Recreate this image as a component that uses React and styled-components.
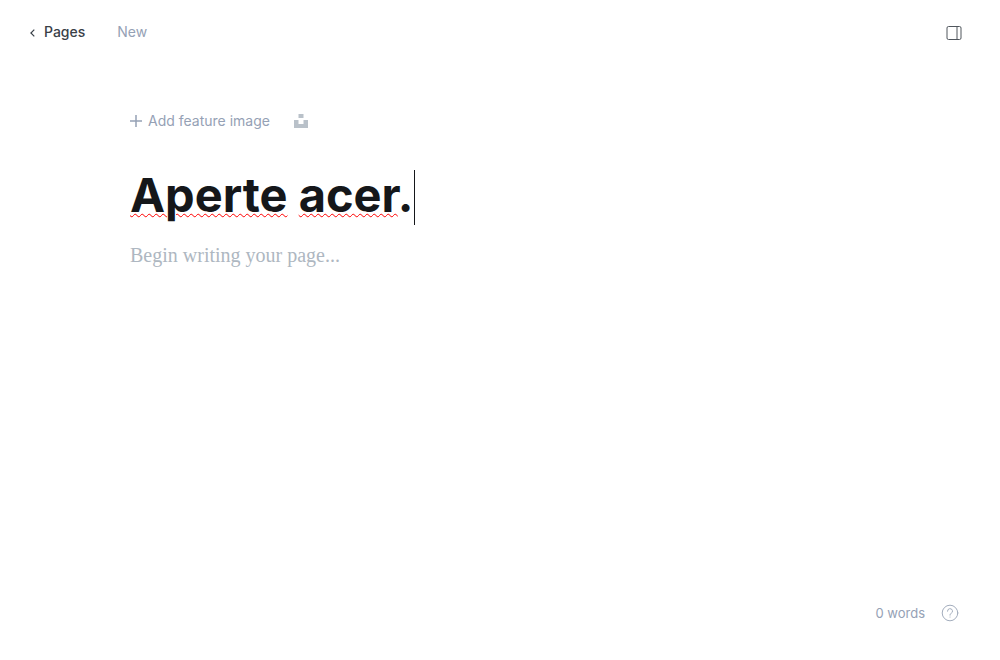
import React from "react";
import styled, { createGlobalStyle } from "styled-components";

const Global = createGlobalStyle`
  *, *::before, *::after { box-sizing: border-box; }
  body { margin: 0; background: #fff; color: #15171a; font-family: Inter, "Liberation Sans", sans-serif; }
  button, input, textarea { font: inherit; border: 0; padding: 0; margin: 0; background: none; outline: 0; }
  button { cursor: pointer; }
  svg { display: block; flex: none; }
`;
const Screen = styled.div`
  min-height: 100vh;
  display: flex;
  flex-direction: column;
`;
const Header = styled.header`
  display: flex;
  align-items: center;
  justify-content: space-between;
  padding: 16px 30px 16px 28px;
`;
const Crumbs = styled.nav`
  display: flex;
  align-items: center;
  gap: 32px;
  font-size: 14px;
  line-height: 32px;
`;
const BackLink = styled.a`
  display: flex;
  align-items: center;
  gap: 8px;
  color: #394047;
  font-weight: 500;
  text-decoration: none;
`;
const Status = styled.span`
  color: #95a1b5;
`;
const IconButton = styled.button`
  display: flex;
  align-items: center;
  justify-content: center;
  width: ${(p) => p.$size}px;
  height: ${(p) => p.$size}px;
  color: ${(p) => p.$color};
`;
const Editor = styled.main`
  flex: 1;
  width: 100%;
  max-width: 740px;
  margin: 0 auto;
  padding-top: 41px;
`;
const Tools = styled.div`
  display: flex;
  align-items: center;
  gap: 24px;
  height: 32px;
`;
const AddImage = styled.button`
  display: flex;
  align-items: center;
  gap: 6px;
  color: #95a1b5;
  font-size: 14px;
  line-height: 16px;
`;
const TitleField = styled.div`
  display: flex;
  align-items: flex-start;
  margin-top: 33px;
`;
const TitleText = styled.h1`
  margin: 0;
  font-size: 47px;
  line-height: 50px;
  font-weight: 700;
  outline: 0;
  caret-color: transparent;
`;
const Typo = styled.span`
  text-decoration: underline wavy #f00 1px;
`;
const Caret = styled.span`
  width: 1px;
  height: 55px;
  background: #15171a;
`;
const Body = styled.textarea`
  display: block;
  width: 100%;
  height: 32px;
  margin-top: 14px;
  resize: none;
  font-family: "Liberation Serif", serif;
  font-size: 20px;
  line-height: 32px;
  &::placeholder { color: #aeb7c1; opacity: 1; }
`;
const Footer = styled.footer`
  display: flex;
  justify-content: flex-end;
  align-items: center;
  gap: 16px;
  padding: 0 41px 38px 0;
  font-size: 13px;
  line-height: 16px;
  color: #95a1b5;
`;

export default function App() {
  return (
    <Screen>
      <Global />
      <Header>
        <Crumbs>
          <BackLink href="#pages">
            <svg width="8" height="10" viewBox="0 0 8 10" fill="none" stroke="currentColor" strokeWidth="1.2"><path d="M6.3 2.6 2.9 6l3.4 3.4" /></svg>
            Pages
          </BackLink>
          <Status>New</Status>
        </Crumbs>
        <IconButton $size={32} $color="#50565d" aria-label="Settings">
          <svg width="16" height="16" viewBox="0 0 16 16" fill="none" stroke="currentColor"><rect x="1" y="2.5" width="14" height="13" rx="1.5" /><path d="M11 2.5v13" /></svg>
        </IconButton>
      </Header>
      <Editor>
        <Tools>
          <AddImage>
            <svg width="12" height="12" viewBox="0 0 12 12" fill="none" stroke="currentColor" strokeWidth="1.5"><path d="M6 0v12M0 6h12" /></svg>
            Add feature image
          </AddImage>
          <IconButton $size={14} $color="#b9c1c9" aria-label="Unsplash">
            <svg width="14" height="14" viewBox="0 0 14 14" fill="currentColor"><path d="M4.5 0h5v4h-5zM0 6h4.5v4h5V6H14v8H0z" /></svg>
          </IconButton>
        </Tools>
        <TitleField>
          <TitleText role="textbox" aria-label="Page title" contentEditable suppressContentEditableWarning spellCheck={false}>
            <Typo>Aperte</Typo> <Typo>acer</Typo>.
          </TitleText>
          <Caret />
        </TitleField>
        <Body aria-label="Page content" placeholder="Begin writing your page..." />
      </Editor>
      <Footer>
        <span>0 words</span>
        <IconButton $size={18} $color="#a3adbd" aria-label="Help">
          <svg width="18" height="18" viewBox="0 0 18 18" fill="none" stroke="currentColor" strokeLinecap="round"><circle cx="9" cy="9" r="7.8" /><path d="M6.5 7.2a2.5 2.5 0 1 1 3.6 2.2c-.7.4-1.100.8-1.100 1.500v.3M9 13v.1" /></svg>
        </IconButton>
      </Footer>
    </Screen>
  );
}
